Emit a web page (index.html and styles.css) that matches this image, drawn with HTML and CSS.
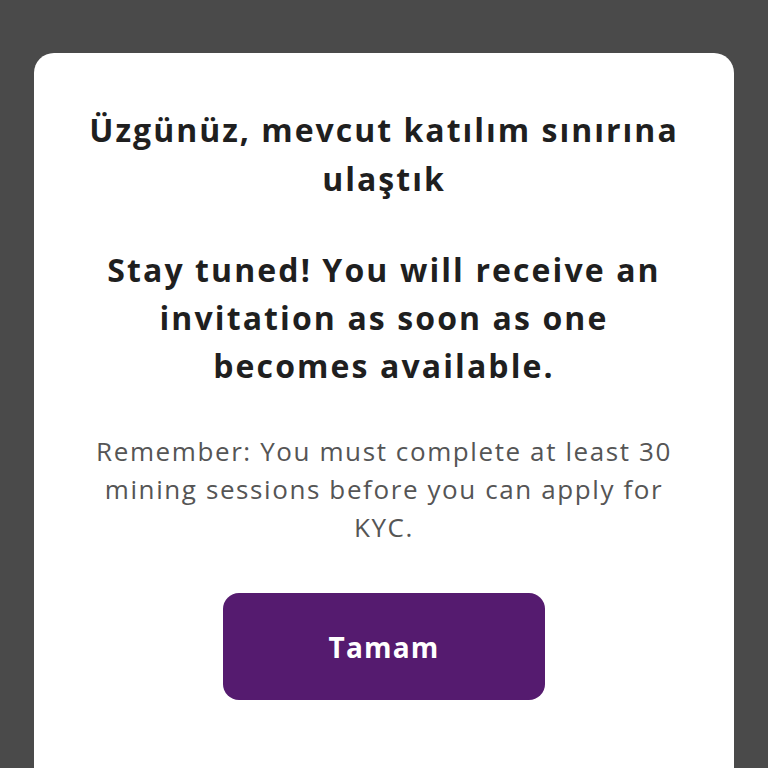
FILE: index.html
```html
<!DOCTYPE html>
<html lang="tr">
<head>
<meta charset="utf-8">
<link rel="stylesheet" href="styles.css">
</head>
<body>
<div class="overlay">
  <div class="card">
    <h1 class="title">Üzgünüz, mevcut katılım sınırına<br>ulaştık</h1>
    <p class="lead">Stay tuned! You will receive an<br>invitation as soon as one<br>becomes available.</p>
    <p class="note">Remember: You must complete at least 30<br>mining sessions before you can apply for<br>KYC.</p>
    <button class="btn">Tamam</button>
  </div>
</div>
</body>
</html>
```
FILE: styles.css
```css
* { box-sizing: border-box; }
html, body { margin: 0; padding: 0; height: 100%; }
body {
  background: #4a4a4a;
  font-family: "Open Sans", "Noto Sans", sans-serif;
  overflow: hidden;
}
.overlay {
  padding: 53px 34px 0 34px;
  height: 100%;
}
.card {
  background: #fff;
  border-radius: 20px 20px 0 0;
  height: 100%;
  padding: 52px 0 0 0;
  display: flex;
  flex-direction: column;
  align-items: center;
  text-align: center;
}
.title {
  margin: 0;
  font-size: 32px;
  font-weight: 700;
  letter-spacing: 2px;
  line-height: 49px;
  color: #1f1f1f;
  white-space: nowrap;
}
.lead {
  margin: 43px 0 0 0;
  font-size: 32px;
  font-weight: 700;
  letter-spacing: 2.1px;
  line-height: 48px;
  color: #1f1f1f;
  white-space: nowrap;
}
.note {
  margin: 42px 0 0 0;
  font-size: 26px;
  font-weight: 400;
  letter-spacing: 1.6px;
  line-height: 38px;
  color: #555;
  white-space: nowrap;
}
.btn {
  margin-top: 47px;
  width: 322px;
  height: 107px;
  border: none;
  border-radius: 16px;
  background: #551b6f;
  color: #fff;
  font-family: inherit;
  font-size: 28px;
  font-weight: 700;
  letter-spacing: 1.2px;
}
```
